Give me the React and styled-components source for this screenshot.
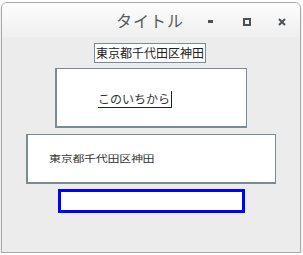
import React from "react";
import styled, { createGlobalStyle } from "styled-components";

const Global = createGlobalStyle`
  html, body { margin: 0; padding: 0; background: #ffffff; }
  body { font-family: "Noto Sans CJK JP", "Liberation Sans", sans-serif; }
`;

const Frame = styled.div`
  position: relative;
  margin: 2px 0 0 1px;
  width: 298px;
  height: 249px;
  border: 1px solid #a8a8a8;
  border-radius: 6px 6px 0 0;
  background: #ececec;
  box-shadow: 0 2px 2px rgba(0, 0, 0, 0.25);
  display: flex;
  flex-direction: column;
  overflow: hidden;
`;

const TitleBar = styled.div`
  height: 34px;
  flex: none;
  background: linear-gradient(#fdfdfd, #efefef);
  display: flex;
  align-items: center;
`;

const Title = styled.div`
  margin-left: 114px;
  font-size: 16px;
  color: #555b60;
  letter-spacing: 1px;
  width: 80px;
  margin-top: -1px;
`;

const WinButton = styled.div`
  width: 37px;
  display: flex;
  justify-content: center;
  align-items: center;
  margin-top: 4px;
`;

const Body = styled.div`
  flex: 1;
  display: flex;
  flex-direction: column;
  align-items: flex-start;
`;

const Label = styled.div`
  margin: 6px 0 0 92px;
  height: 18px;
  padding: 0 1px;
  border: 1px solid #7c8a97;
  background: #fff;
  font-size: 12px;
  line-height: 18px;
  color: #222;
`;

const Box = styled.div`
  margin: ${(p) => p.$m};
  width: ${(p) => p.$w}px;
  height: ${(p) => p.$h}px;
  border: ${(p) => (p.$blue ? "3px solid #0000ff" : "1px solid #7c8a97")};
  border-width: ${(p) => (p.$blue ? "3px" : "1px 1px 2px 2px")};
  background: #fff;
  box-sizing: border-box;
  display: flex;
  align-items: center;
`;

const Field = styled.div`
  margin-left: 41px;
  margin-top: 3px;
  font-size: 12px;
  color: #333;
  border-bottom: 1px solid #222;
  border-right: 1px solid #222;
  line-height: 16px;
  padding-right: 1px;
`;

const Squash = styled.div`
  margin-left: 21px;
  font-size: 12px;
  color: #333;
  transform: scaleY(0.72);
  transform-origin: left center;
  letter-spacing: -0.3px;
`;

export default function App() {
  return (
    <>
      <Global />
      <Frame>
        <TitleBar>
          <Title>タイトル</Title>
          <WinButton>
            <svg width="6" height="4"><rect x="0" y="0" width="5" height="3" fill="#4a5258" /></svg>
          </WinButton>
          <WinButton>
            <svg width="8" height="8"><rect x="1" y="1" width="6" height="6" fill="none" stroke="#4a5258" strokeWidth="2" /></svg>
          </WinButton>
          <WinButton>
            <svg width="8" height="8"><path d="M1 1L7 7M7 1L1 7" stroke="#4a5258" strokeWidth="2" /></svg>
          </WinButton>
        </TitleBar>
        <Body>
          <Label>東京都千代田区神田</Label>
          <Box $m="5px 0 0 53px" $w={192} $h={60}>
            <Field>このいちから</Field>
          </Box>
          <Box $m="6px 0 0 24px" $w={250} $h={50}>
            <Squash>東京都千代田区神田</Squash>
          </Box>
          <Box $blue $m="5px 0 0 56px" $w={187} $h={24} />
        </Body>
      </Frame>
    </>
  );
}
